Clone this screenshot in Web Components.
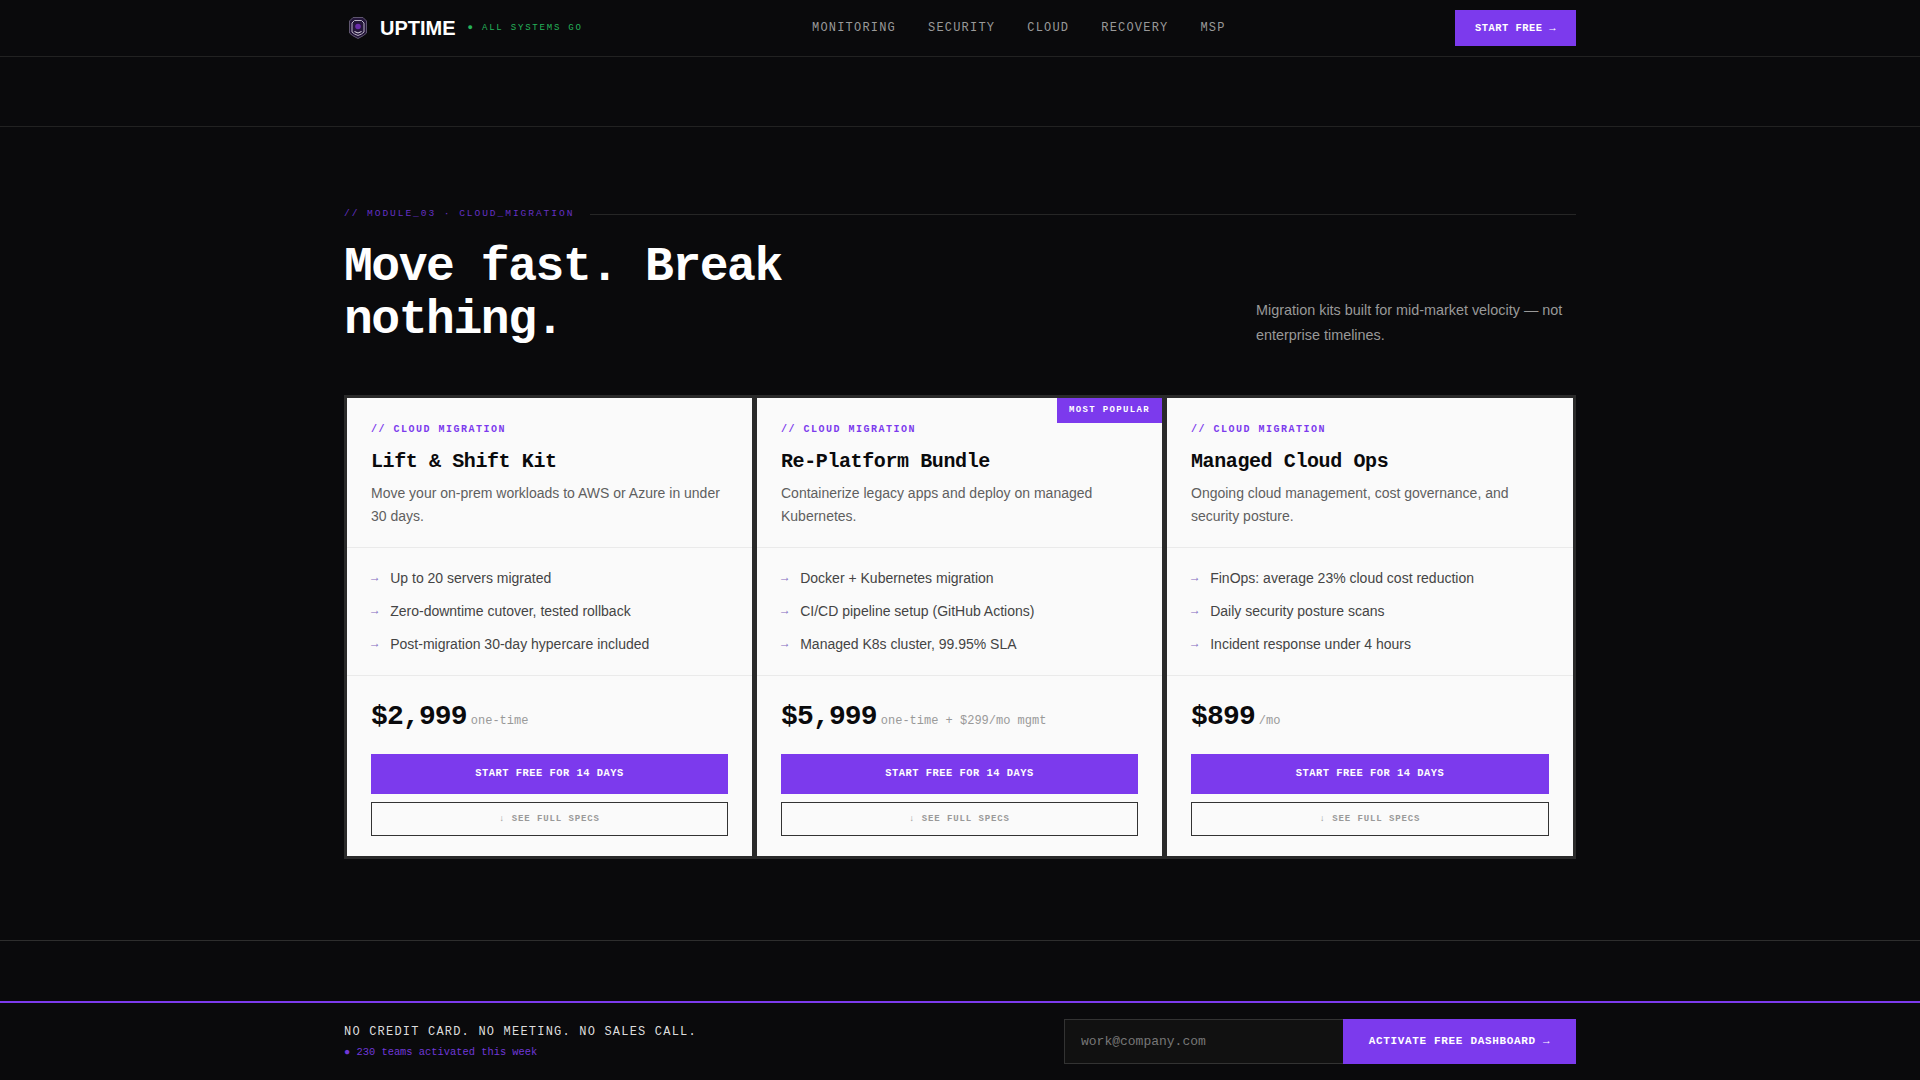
<!DOCTYPE html>
<html lang="en">
<head>
<meta charset="utf-8">
<title>Uptime</title>
<style>
  html, body { margin: 0; height: 100%; background: #0a0a0c; }
  body { display: flex; flex-direction: column; min-height: 1080px; font-family: "Liberation Sans", Arial, sans-serif; }
  activate-bar { margin-top: auto; }
</style>
</head>
<body>
<site-nav></site-nav>
<empty-strip></empty-strip>
<pricing-section eyebrow="// MODULE_03 · CLOUD_MIGRATION" intro="Migration kits built for mid-market velocity — not enterprise timelines.">
  <span slot="title">Move fast. Break<br>nothing.</span>
  <price-card name="Lift &amp; Shift Kit" desc="Move your on-prem workloads to AWS or Azure in under 30 days." price="$2,999" term="one-time">
    <feature-item>Up to 20 servers migrated</feature-item>
    <feature-item>Zero-downtime cutover, tested rollback</feature-item>
    <feature-item>Post-migration 30-day hypercare included</feature-item>
  </price-card>
  <price-card name="Re-Platform Bundle" desc="Containerize legacy apps and deploy on managed Kubernetes." price="$5,999" term="one-time + $299/mo mgmt" badge="MOST POPULAR">
    <feature-item>Docker + Kubernetes migration</feature-item>
    <feature-item>CI/CD pipeline setup (GitHub Actions)</feature-item>
    <feature-item>Managed K8s cluster, 99.95% SLA</feature-item>
  </price-card>
  <price-card name="Managed Cloud Ops" desc="Ongoing cloud management, cost governance, and security posture." price="$899" term="/mo">
    <feature-item>FinOps: average 23% cloud cost reduction</feature-item>
    <feature-item>Daily security posture scans</feature-item>
    <feature-item>Incident response under 4 hours</feature-item>
  </price-card>
</pricing-section>
<activate-bar></activate-bar>

<script>
const MONO = `"Liberation Mono", "Courier New", monospace`;
const SANS = `"Liberation Sans", Arial, sans-serif`;

class SiteNav extends HTMLElement {
  constructor() {
    super();
    this.attachShadow({ mode: 'open' });
  }

  connectedCallback() {
    const links = ['MONITORING', 'SECURITY', 'CLOUD', 'RECOVERY', 'MSP'];
    this.shadowRoot.innerHTML = `
      <style>
        :host { display: block; border-bottom: 1px solid #222; height: 56px; }
        .inner { width: 1232px; height: 56px; margin: 0 auto; display: flex; justify-content: space-between; align-items: center; }
        .brand { display: flex; align-items: center; }
        .brand svg { width: 24px; height: 24px; margin: 0 11px 0 1px; flex: none; }
        .name { font: bold 20px ${SANS}; color: #fff; }
        .status { font: 9px ${MONO}; letter-spacing: 0.2em; color: #25b35a; margin-left: 12px; }
        ul { display: flex; gap: 32px; list-style: none; margin: 0; padding: 0 0 4px; }
        a { font: 12px ${MONO}; letter-spacing: 0.1em; color: #999; text-decoration: none; }
        .cta { display: block; background: #7c3aed; color: #fff; font: bold 10.4px/37px ${MONO}; letter-spacing: 0.05em; padding: 0 20px; height: 36px; }
      </style>
      <div class="inner">
        <div class="brand">
          <svg viewBox="0 0 24 24" fill="none" stroke-linejoin="round">
            <path d="M8 1.500h10l3.500 3.500v12l-3 2.500-5.500 3-5.500-3-3-2.500V5z" fill="#24163a" stroke="#5f5670" stroke-width="1"/>
            <path d="M9.500 4.500h7l2.500 2.500v9l-2.500 2-3.500 1.500-3.500-1.500-2.500-2V7z" stroke="#b9b2c4" stroke-width="1"/>
            <circle cx="13" cy="10.500" r="2.800" fill="#6a2ca8"/>
            <path d="M9.500 15.500l3.500 1.500 3.500-1.500" stroke="#e0dbe6" stroke-width="1"/>
          </svg>
          <span class="name">UPTIME</span>
          <span class="status">● ALL SYSTEMS GO</span>
        </div>
        <ul>${links.map(l => `<li><a href="#">${l}</a></li>`).join('')}</ul>
        <a class="cta" href="#">START FREE →</a>
      </div>
    `;
  }
}

class EmptyStrip extends HTMLElement {
  constructor() {
    super();
    this.attachShadow({ mode: 'open' }).innerHTML = `
      <style>:host { display: block; height: 69px; border-bottom: 1px solid #222; }</style>
    `;
  }
}

class PricingSection extends HTMLElement {
  constructor() {
    super();
    this.attachShadow({ mode: 'open' });
  }

  connectedCallback() {
    this.shadowRoot.innerHTML = `
      <style>
        :host { display: block; border-bottom: 1px solid #2e2e2e; padding: 80px 0 81px; }
        .inner { width: 1232px; margin: 0 auto; }
        .eyebrow { display: flex; align-items: center; gap: 16px; font: 9.6px/14px ${MONO}; letter-spacing: 0.2em; color: #6430c4; }
        .eyebrow::after { content: ""; flex: 1; height: 1px; background: #262626; }
        .head { display: flex; justify-content: space-between; align-items: flex-end; margin: 20px 0 48px; }
        h1 { margin: 0; font: bold 48px/1.1 ${MONO}; letter-spacing: -0.03em; color: #fff; }
        p { margin: 0 0 -1px; width: 320px; font: 14.4px/25px ${SANS}; color: #999; }
        .grid { display: grid; grid-template-columns: 409px 409px 1fr; gap: 1px; padding: 1px; background: #2a2a2a; }
      </style>
      <div class="inner">
        <div class="eyebrow">${this.getAttribute('eyebrow')}</div>
        <div class="head">
          <h1><slot name="title"></slot></h1>
          <p>${this.getAttribute('intro')}</p>
        </div>
        <div class="grid"><slot></slot></div>
      </div>
    `;
  }
}

class PriceCard extends HTMLElement {
  constructor() {
    super();
    this.attachShadow({ mode: 'open' });
  }

  connectedCallback() {
    const badge = this.getAttribute('badge');
    this.shadowRoot.innerHTML = `
      <style>
        :host { display: block; position: relative; background: #fafafa; border: 2px solid #2a2a2a; min-width: 0; }
        .badge { position: absolute; top: 0; right: 0; background: #7c3aed; color: #fff; font: bold 9px/13px ${MONO}; letter-spacing: 0.15em; padding: 6px 12px; }
        .top { padding: 24px 24px 19px; border-bottom: 1px solid #eaeaea; }
        .label { font: bold 10px/16px ${MONO}; letter-spacing: 0.15em; color: #7c3aed; margin-bottom: 12px; }
        h3 { margin: 0 0 8px; font: bold 20px/24px ${MONO}; letter-spacing: -0.02em; color: #0a0a0c; }
        .desc { margin: 0; font: 14px/23px ${SANS}; color: #5f5f5f; }
        .features { display: flex; flex-direction: column; gap: 12px; padding: 20px 24px; border-bottom: 1px solid #eaeaea; }
        .bottom { padding: 25px 24px 20px; }
        .price { display: flex; align-items: baseline; gap: 4px; height: 32px; margin-bottom: 21px; }
        .amount { font: bold 28px/32px ${MONO}; letter-spacing: -0.03em; color: #0a0a0c; }
        .term { font: 12px ${MONO}; color: #999; }
        .primary, .secondary { display: block; box-sizing: border-box; text-align: center; text-decoration: none; font-family: ${MONO}; font-weight: bold; }
        .primary { height: 40px; line-height: 38px; background: #7c3aed; color: #fff; font-size: 10.4px; letter-spacing: 0.05em; margin-bottom: 8px; }
        .secondary { height: 34px; line-height: 32px; border: 1px solid #333; color: #999; font-size: 9px; letter-spacing: 0.1em; }
      </style>
      ${badge ? `<div class="badge">${badge}</div>` : ''}
      <div class="top">
        <div class="label">// CLOUD MIGRATION</div>
        <h3>${this.getAttribute('name')}</h3>
        <p class="desc">${this.getAttribute('desc')}</p>
      </div>
      <div class="features"><slot></slot></div>
      <div class="bottom">
        <div class="price"><span class="amount">${this.getAttribute('price')}</span><span class="term">${this.getAttribute('term')}</span></div>
        <a class="primary" href="#">START FREE FOR 14 DAYS</a>
        <a class="secondary" href="#">↓ SEE FULL SPECS</a>
      </div>
    `;
  }
}

class FeatureItem extends HTMLElement {
  constructor() {
    super();
    this.attachShadow({ mode: 'open' }).innerHTML = `
      <style>
        :host { display: flex; align-items: center; gap: 12px; font: 14px/21px ${SANS}; color: #444; }
        i { font: normal 12px/21px ${MONO}; color: #8268c0; }
      </style>
      <i>→</i><span><slot></slot></span>
    `;
  }
}

class ActivateBar extends HTMLElement {
  constructor() {
    super();
    this.attachShadow({ mode: 'open' }).innerHTML = `
      <style>
        :host { display: block; border-top: 2px solid #7c3aed; background: #0a0a0c; height: 77px; }
        .inner { width: 1232px; height: 77px; margin: 0 auto; display: flex; justify-content: space-between; align-items: center; }
        .line { font: 12px/16px ${MONO}; letter-spacing: 0.1em; color: #ddd; }
        .sub { font: 10.4px/14px ${MONO}; color: #7038d8; margin-top: 5px; }
        form { display: flex; height: 45px; margin: 0; }
        input { box-sizing: border-box; width: 279px; height: 45px; background: #111; border: 1px solid #333; border-right: 0; padding: 0 16px; font: 13px ${MONO}; color: #ddd; outline: 0; border-radius: 0; }
        input::placeholder { color: #777; opacity: 1; }
        button { width: 233px; height: 45px; border: 0; border-radius: 0; background: #7c3aed; color: #fff; font: bold 11px ${MONO}; letter-spacing: 0.06em; padding: 0 0 2px; }
      </style>
      <div class="inner">
        <div>
          <div class="line">NO CREDIT CARD. NO MEETING. NO SALES CALL.</div>
          <div class="sub">● 230 teams activated this week</div>
        </div>
        <form>
          <input type="email" placeholder="work@company.com">
          <button type="button">ACTIVATE FREE DASHBOARD →</button>
        </form>
      </div>
    `;
  }
}

customElements.define('site-nav', SiteNav);
customElements.define('empty-strip', EmptyStrip);
customElements.define('pricing-section', PricingSection);
customElements.define('price-card', PriceCard);
customElements.define('feature-item', FeatureItem);
customElements.define('activate-bar', ActivateBar);
</script>
</body>
</html>
